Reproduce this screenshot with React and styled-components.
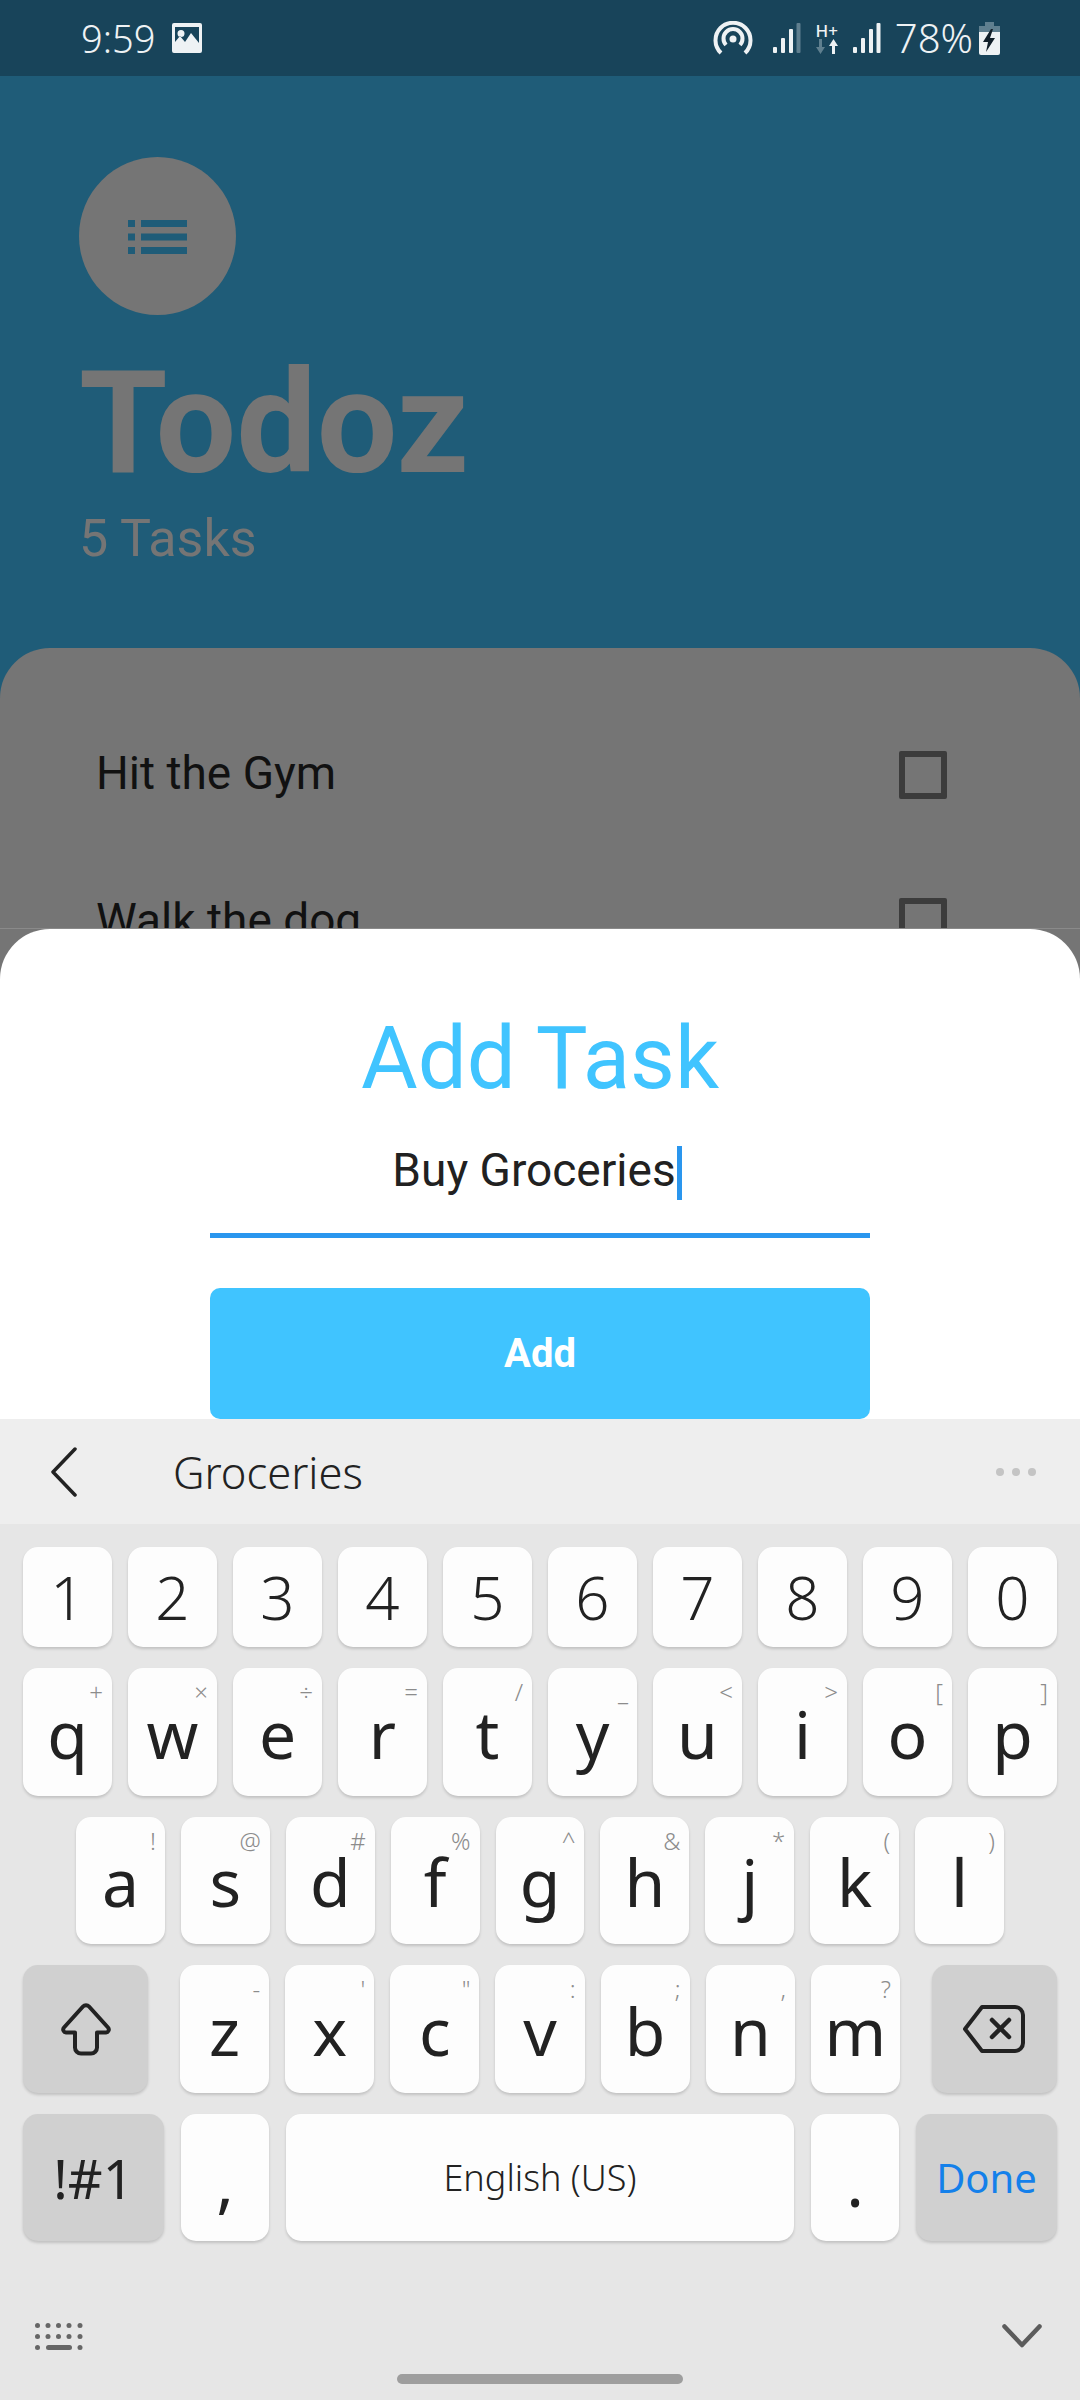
import React from 'react';
import styled, { createGlobalStyle } from 'styled-components';

const GlobalStyle = createGlobalStyle`
  html, body {
    margin: 0;
    padding: 0;
    background: #1f5c78;
  }
  * {
    box-sizing: border-box;
  }
`;

const Screen = styled.div`
  position: relative;
  display: flex;
  flex-direction: column;
  width: 1080px;
  height: 2400px;
  overflow: hidden;
  background: #1f5c78;
  font-family: Roboto, sans-serif;
`;

const StatusBar = styled.div`
  display: flex;
  align-items: center;
  justify-content: space-between;
  flex: none;
  height: 76px;
  padding: 0 80px 0 81px;
  background: #18445a;
  color: #eef2f4;
`;

const StatusGroup = styled.div`
  display: flex;
  align-items: center;
  gap: ${props => props.$gap}px;
`;

const StatusText = styled.span`
  margin-right: ${props => props.$after || 0}px;
  font-family: 'Noto Sans', sans-serif;
  font-size: ${props => props.$size || 38}px;
  font-weight: 300;
  line-height: 38px;
`;

const HotspotSlot = styled.span`
  display: flex;
  margin-right: 6px;
`;

const NetworkType = styled.div`
  display: flex;
  flex-direction: column;
  align-items: center;
  width: 24px;
`;

const NetworkLabel = styled.span`
  font-family: 'Noto Sans', sans-serif;
  font-size: 17px;
  font-weight: 500;
  line-height: 16px;
`;

const Header = styled.header`
  display: flex;
  flex-direction: column;
  flex: none;
  height: 572px;
  padding: 81px 0 0 79px;
`;

const MenuCircle = styled.div`
  display: flex;
  align-items: center;
  justify-content: center;
  width: 157px;
  height: 158px;
  padding-top: 2px;
  border-radius: 50%;
  background: #757575;
`;

const Title = styled.h1`
  margin: 33px 0 0;
  font-size: 143px;
  font-weight: 700;
  line-height: 150px;
  color: #757575;
`;

const TaskCount = styled.div`
  margin-top: 9px;
  font-size: 52px;
  line-height: 64px;
  color: #757575;
`;

const TaskPanel = styled.section`
  flex: 1;
  padding: 53px 133px 0 96px;
  border-radius: 50px 50px 0 0;
  background: #757575;
`;

const TaskRow = styled.div`
  display: flex;
  align-items: center;
  justify-content: space-between;
  height: 147px;
`;

const TaskName = styled.span`
  margin-top: -4px;
  font-size: 46px;
  color: #111111;
`;

const Checkbox = styled.span`
  width: 48px;
  height: 48px;
  border: 6px solid #3c3c3c;
  border-radius: 2px;
`;

const Sheet = styled.div`
  position: absolute;
  left: 0;
  right: 0;
  bottom: 0;
  height: 1472px;
  display: flex;
  flex-direction: column;
  border-top: 1px solid #8a8a8a;
`;

const SheetBody = styled.div`
  display: flex;
  flex-direction: column;
  align-items: center;
  flex: none;
  height: 490px;
  padding-top: 74px;
  border-radius: 50px 50px 0 0;
  background: #ffffff;
`;

const SheetTitle = styled.h2`
  margin: 0;
  font-size: 87px;
  font-weight: 400;
  line-height: 110px;
  color: #40c4ff;
`;

const InputField = styled.div`
  display: flex;
  align-items: flex-start;
  justify-content: center;
  width: 660px;
  height: 104px;
  margin-top: 21px;
  padding: 12px 6px 0 0;
  border-bottom: 5px solid #2a96ee;
  font-size: 46px;
  line-height: 48px;
  color: #212121;
`;

const Caret = styled.span`
  width: 5px;
  height: 54px;
  margin-left: 1px;
  background: #2a96ee;
`;

const AddButton = styled.button`
  flex: none;
  width: 660px;
  height: 131px;
  margin-top: 50px;
  border: 0;
  border-radius: 10px;
  background: #40c4ff;
  color: #ffffff;
  font-family: Roboto, sans-serif;
  font-size: 40px;
  font-weight: 700;
`;

const Keyboard = styled.div`
  display: flex;
  flex-direction: column;
  flex: 1;
  background: #e6e6e6;
  font-family: 'Noto Sans', sans-serif;
  color: #222222;
`;

const SuggestionBar = styled.div`
  display: flex;
  align-items: center;
  flex: none;
  height: 105px;
  padding: 0 44px 0 51px;
  background: #eeeeee;
`;

const Suggestion = styled.span`
  flex: 1;
  margin-left: 96px;
  font-size: 43.500px;
  font-weight: 350;
`;

const MoreDots = styled.div`
  display: flex;
  gap: 8px;
`;

const Dot = styled.span`
  width: 8px;
  height: 8px;
  border-radius: 50%;
  background: #c4c4c4;
`;

const KeyRows = styled.div`
  display: flex;
  flex-direction: column;
  gap: 21px;
  padding: 23px 23px 0;
`;

const KeyRow = styled.div`
  display: flex;
  gap: ${props => props.$gap || 16}px;
  height: ${props => props.$height}px;
  padding: 0 ${props => props.$inset || 0}px;
`;

const Key = styled.div`
  position: relative;
  display: flex;
  align-items: center;
  justify-content: center;
  flex: ${props => (props.$width ? `none` : `1`)};
  width: ${props => (props.$width ? `${props.$width}px` : `auto`)};
  margin: 0 ${props => props.$after || 0}px 0 ${props => props.$before || 0}px;
  padding-top: ${props => props.$drop || 0}px;
  border-radius: 15px;
  background: ${props => (props.$mod ? '#d0d0d0' : '#fdfdfd')};
  box-shadow: 0 2px 3px rgba(0, 0, 0, 0.16);
  font-size: ${props => props.$size || 66}px;
  font-weight: ${props => props.$weight || 400};
  color: ${props => props.$color || '#222222'};
`;

const Hint = styled.span`
  position: absolute;
  top: 8px;
  right: 9px;
  font-size: 24px;
  font-weight: 300;
  line-height: 32px;
  color: #8c8c8c;
`;

const KeyboardFooter = styled.div`
  display: flex;
  align-items: center;
  justify-content: space-between;
  height: 48px;
  margin-top: 71px;
  padding: 0 38px 0 35px;
`;

const HomeBar = styled.div`
  align-self: center;
  width: 286px;
  height: 10px;
  margin-top: 14px;
  border-radius: 5px;
  background: #9e9e9e;
`;

const letterRows = [
  { inset: 0, keys: [['q', '+'], ['w', '×'], ['e', '÷'], ['r', '='], ['t', '/'], ['y', '_'], ['u', '<'], ['i', '>'], ['o', '['], ['p', ']']] },
  { inset: 53, keys: [['a', '!'], ['s', '@'], ['d', '#'], ['f', '%'], ['g', '^'], ['h', '&'], ['j', '*'], ['k', '('], ['l', ')']] },
];

const bottomLetters = [['z', '-'], ['x', "'"], ['c', '"'], ['v', ':'], ['b', ';'], ['n', ','], ['m', '?']];

const digits = ['1', '2', '3', '4', '5', '6', '7', '8', '9', '0'];

const tasks = ['Hit the Gym', 'Walk the dog'];

const ImageIcon = () => (
  <svg width="30" height="30" viewBox="0 0 30 30">
    <path
      fill="#eef2f4"
      fillRule="evenodd"
      d="M2 0h26a2 2 0 0 1 2 2v26a2 2 0 0 1-2 2H2a2 2 0 0 1-2-2V2a2 2 0 0 1 2-2Zm1 4v15l5-6 5 6 6-9 8 10V4Zm6 3a3.500 3.500 0 1 1 0 7 3.500 3.500 0 0 1 0-7Z"
    />
  </svg>
);

const HotspotIcon = () => (
  <svg width="40" height="34" viewBox="0 0 40 34" fill="none" stroke="#eef2f4" strokeWidth="4">
    <path d="M8 32a17.500 17.500 0 1 1 24 0" />
    <path d="M13 24a9.500 9.500 0 1 1 14 0" />
    <circle cx="20" cy="18" r="3.500" fill="#eef2f4" stroke="none" />
  </svg>
);

const SignalIcon = ({ faded }) => (
  <svg width="28" height="30" viewBox="0 0 28 30" fill="#eef2f4">
    <rect x="0" y="24" width="4" height="6" rx="1" />
    <rect x="8" y="15" width="4" height="15" rx="1" />
    <rect x="16" y="6" width="4" height="24" rx="1" />
    <rect x="23.500" y="0" width="4" height="30" rx="1" fill={faded ? '#5f7f8f' : '#eef2f4'} />
  </svg>
);

const TransferIcon = () => (
  <svg width="24" height="15" viewBox="0 0 24 15">
    <path d="M4 0h3v8h3l-4.500 7L1 8h3Z" fill="#5f7f8f" />
    <path d="M17 15h3V7h3l-4.500-7L14 7h3Z" fill="#eef2f4" />
  </svg>
);

const BatteryIcon = () => (
  <svg width="21" height="33" viewBox="0 0 21 33">
    <path d="M6 0h9v4h6v6H0V4h6Z" fill="#5f7f8f" />
    <path d="M0 10h21v21a2 2 0 0 1-2 2H2a2 2 0 0 1-2-2Z" fill="#eef2f4" />
    <path d="M12 7 4 20h5l-2 10 9-14h-5l3-9Z" fill="#12202a" />
  </svg>
);

const ListIcon = () => (
  <svg width="59" height="34" viewBox="0 0 59 34" fill="#1f5c78">
    <rect x="0" y="0" width="7" height="7" />
    <rect x="13" y="0" width="46" height="7" />
    <rect x="0" y="13.500" width="7" height="7" />
    <rect x="13" y="13.500" width="46" height="7" />
    <rect x="0" y="27" width="7" height="7" />
    <rect x="13" y="27" width="46" height="7" />
  </svg>
);

const BackIcon = () => (
  <svg width="26" height="50" viewBox="0 0 26 50" fill="none" stroke="#222222" strokeWidth="3.500" strokeLinecap="round" strokeLinejoin="round">
    <path d="M24 2 2 25l22 23" />
  </svg>
);

const ShiftIcon = () => (
  <svg width="52" height="54" viewBox="0 0 52 54" fill="none" stroke="#222222" strokeWidth="4" strokeLinejoin="round">
    <path d="M23 4.500a4 4 0 0 1 6 0l19 21a3 3 0 0 1-2 5H37v15a6 6 0 0 1-6 6H21a6 6 0 0 1-6-6v-15H6a3 3 0 0 1-2-5Z" />
  </svg>
);

const BackspaceIcon = () => (
  <svg width="62" height="48" viewBox="0 0 62 48" fill="none" stroke="#222222" strokeWidth="4" strokeLinejoin="round" strokeLinecap="round">
    <path d="M19 2h33a8 8 0 0 1 8 8v28a8 8 0 0 1-8 8H19L2 24Z" />
    <path d="M29 15l17 17M46 15 29 32" strokeWidth="4.500" />
  </svg>
);

const KeyboardIcon = () => (
  <svg width="48" height="27" viewBox="0 0 48 27" fill="#666666">
    {[0, 1].map(row =>
      [2.500, 13, 23.500, 34, 45].map(x => <circle key={`${row}-${x}`} cx={x} cy={2.500 + row * 11} r="2.500" />),
    )}
    <circle cx="2.500" cy="24.500" r="2.500" />
    <rect x="11" y="22" width="26" height="5" rx="2.500" />
    <circle cx="45" cy="24.500" r="2.500" />
  </svg>
);

const ChevronDownIcon = () => (
  <svg width="40" height="24" viewBox="0 0 40 24" fill="none" stroke="#5c5c5c" strokeWidth="4.500" strokeLinecap="round" strokeLinejoin="round">
    <path d="M2.500 2.500 20 21 37.500 2.500" />
  </svg>
);

const App = () => (
  <Screen>
    <GlobalStyle />
    <StatusBar>
      <StatusGroup $gap={17}>
        <StatusText>9:59</StatusText>
        <ImageIcon />
      </StatusGroup>
      <StatusGroup $gap={14}>
        <HotspotSlot>
          <HotspotIcon />
        </HotspotSlot>
        <SignalIcon faded />
        <NetworkType>
          <NetworkLabel>H+</NetworkLabel>
          <TransferIcon />
        </NetworkType>
        <SignalIcon />
        <StatusText $size={40} $after={-8}>
          78%
        </StatusText>
        <BatteryIcon />
      </StatusGroup>
    </StatusBar>

    <Header>
      <MenuCircle>
        <ListIcon />
      </MenuCircle>
      <Title>Todoz</Title>
      <TaskCount>5 Tasks</TaskCount>
    </Header>

    <TaskPanel>
      {tasks.map(task => (
        <TaskRow key={task}>
          <TaskName>{task}</TaskName>
          <Checkbox />
        </TaskRow>
      ))}
    </TaskPanel>

    <Sheet>
      <SheetBody>
        <SheetTitle>Add Task</SheetTitle>
        <InputField>
          Buy Groceries
          <Caret />
        </InputField>
        <AddButton>Add</AddButton>
      </SheetBody>
      <Keyboard>
        <SuggestionBar>
          <BackIcon />
          <Suggestion>Groceries</Suggestion>
          <MoreDots>
            <Dot />
            <Dot />
            <Dot />
          </MoreDots>
        </SuggestionBar>
        <KeyRows>
          <KeyRow $height={100}>
            {digits.map(digit => (
              <Key key={digit} $size={60} $weight={350}>
                {digit}
              </Key>
            ))}
          </KeyRow>
          {letterRows.map(row => (
            <KeyRow key={row.inset} $height={127.6} $inset={row.inset}>
              {row.keys.map(([letter, hint]) => (
                <Key key={letter} $drop={2}>
                  {letter}
                  <Hint>{hint}</Hint>
                </Key>
              ))}
            </KeyRow>
          ))}
          <KeyRow $height={127.6}>
            <Key $mod $width={125} $after={16}>
              <ShiftIcon />
            </Key>
            {bottomLetters.map(([letter, hint]) => (
              <Key key={letter} $drop={2}>
                {letter}
                <Hint>{hint}</Hint>
              </Key>
            ))}
            <Key $mod $width={125} $before={16}>
              <BackspaceIcon />
            </Key>
          </KeyRow>
          <KeyRow $height={127.6} $gap={17}>
            <Key $mod $width={141} $size={54}>
              !#1
            </Key>
            <Key $width={88} $drop={6}>
              ,
            </Key>
            <Key $size={36} $weight={300}>
              English (US)
            </Key>
            <Key $width={88} $drop={6}>
              .
            </Key>
            <Key $mod $width={141} $size={40} $color="#1480ea">
              Done
            </Key>
          </KeyRow>
        </KeyRows>
        <KeyboardFooter>
          <KeyboardIcon />
          <ChevronDownIcon />
        </KeyboardFooter>
        <HomeBar />
      </Keyboard>
    </Sheet>
  </Screen>
);

export default App;
